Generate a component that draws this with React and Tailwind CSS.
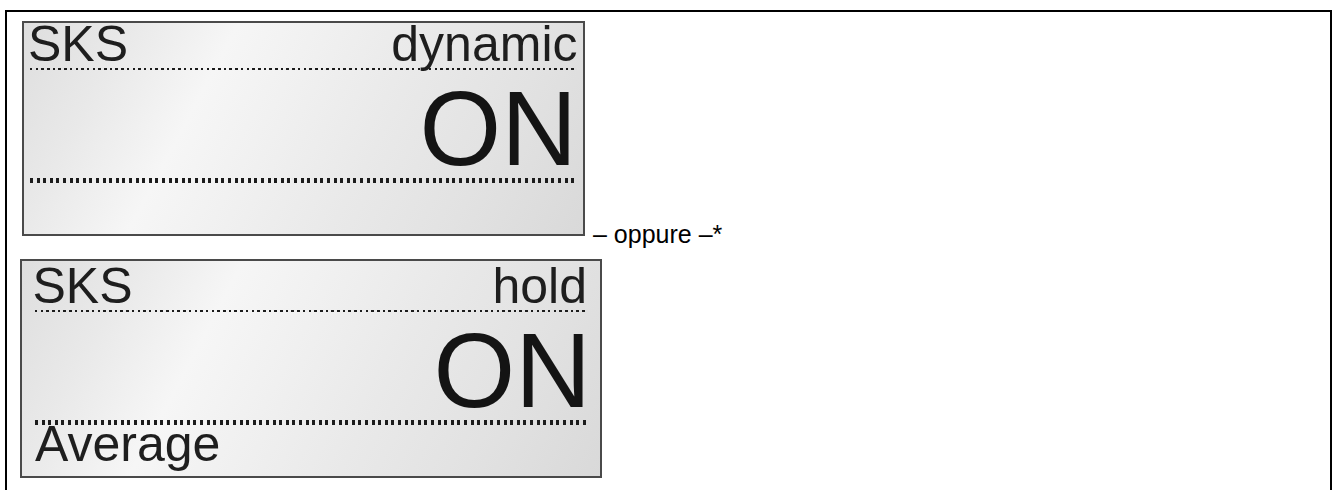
import React from "react";

const font = "font-['Liberation_Sans',Arial,Helvetica,sans-serif]";

function SmallDots({ className = "" }) {
  return (
    <div
      className={`h-[2px] bg-[repeating-linear-gradient(90deg,#1c1c1c_0px,#1c1c1c_2.5px,transparent_2.5px,transparent_5.7px)] ${className}`}
    />
  );
}

function TallDots({ className = "" }) {
  return (
    <div
      className={`h-[5px] bg-[repeating-linear-gradient(90deg,#1c1c1c_0px,#1c1c1c_3px,transparent_3px,transparent_6.6px)] ${className}`}
    />
  );
}

const panelBg =
  "bg-[linear-gradient(118deg,#dedede_0%,#e9e9e9_16%,#f6f6f6_32%,#f0f0f0_46%,#e9e9e9_62%,#e2e2e2_80%,#d9d9d9_100%)]";

function Panel1() {
  return (
    <div
      className={`ml-[15px] w-[563px] h-[215px] shrink-0 border-2 border-[#4a4a4a] ${panelBg} text-[#1e1e1e] flex flex-col`}
    >
      <div className="pt-[2.5px] pl-[4px] pr-[5.5px] flex justify-between text-[50px] leading-[36px]">
        <span>SKS</span>
        <span>dynamic</span>
      </div>
      <SmallDots className="mt-[6.5px] ml-[6px] mr-[6px]" />
      <div className="mt-[21px] pr-[6px] flex justify-end text-[105px] leading-[76px] text-[#141414]">
        <span>ON</span>
      </div>
      <TallDots className="mt-[11px] ml-[6px] mr-[6px]" />
    </div>
  );
}

function Panel2() {
  return (
    <div
      className={`ml-[13px] mt-[23px] w-[582px] h-[219px] shrink-0 border-2 border-[#4a4a4a] ${panelBg} text-[#1e1e1e] flex flex-col`}
    >
      <div className="pt-[6.5px] pl-[10.5px] pr-[13px] flex justify-between text-[50px] leading-[36px]">
        <span>SKS</span>
        <span>hold</span>
      </div>
      <SmallDots className="mt-[6.5px] ml-[13px] mr-[14px]" />
      <div className="mt-[21px] pr-[9px] flex justify-end text-[105px] leading-[76px] text-[#141414]">
        <span>ON</span>
      </div>
      <TallDots className="mt-[10.5px] ml-[13px] mr-[14px]" />
      <div className="mt-[1px] pl-[13px] text-[50px] leading-[36px]">
        <span>Average</span>
      </div>
    </div>
  );
}

export default function App() {
  return (
    <div className={`${font} bg-white h-[490px] overflow-hidden pt-[10px] pl-[5px] pr-[4px]`}>
      <div className="border-2 border-black h-[520px] pt-[9px]">
        <div className="flex items-end">
          <Panel1 />
          <span className="ml-[8px] mb-[-11px] text-[25px] leading-[25px] text-black whitespace-nowrap">
            – oppure –*
          </span>
        </div>
        <Panel2 />
      </div>
    </div>
  );
}
